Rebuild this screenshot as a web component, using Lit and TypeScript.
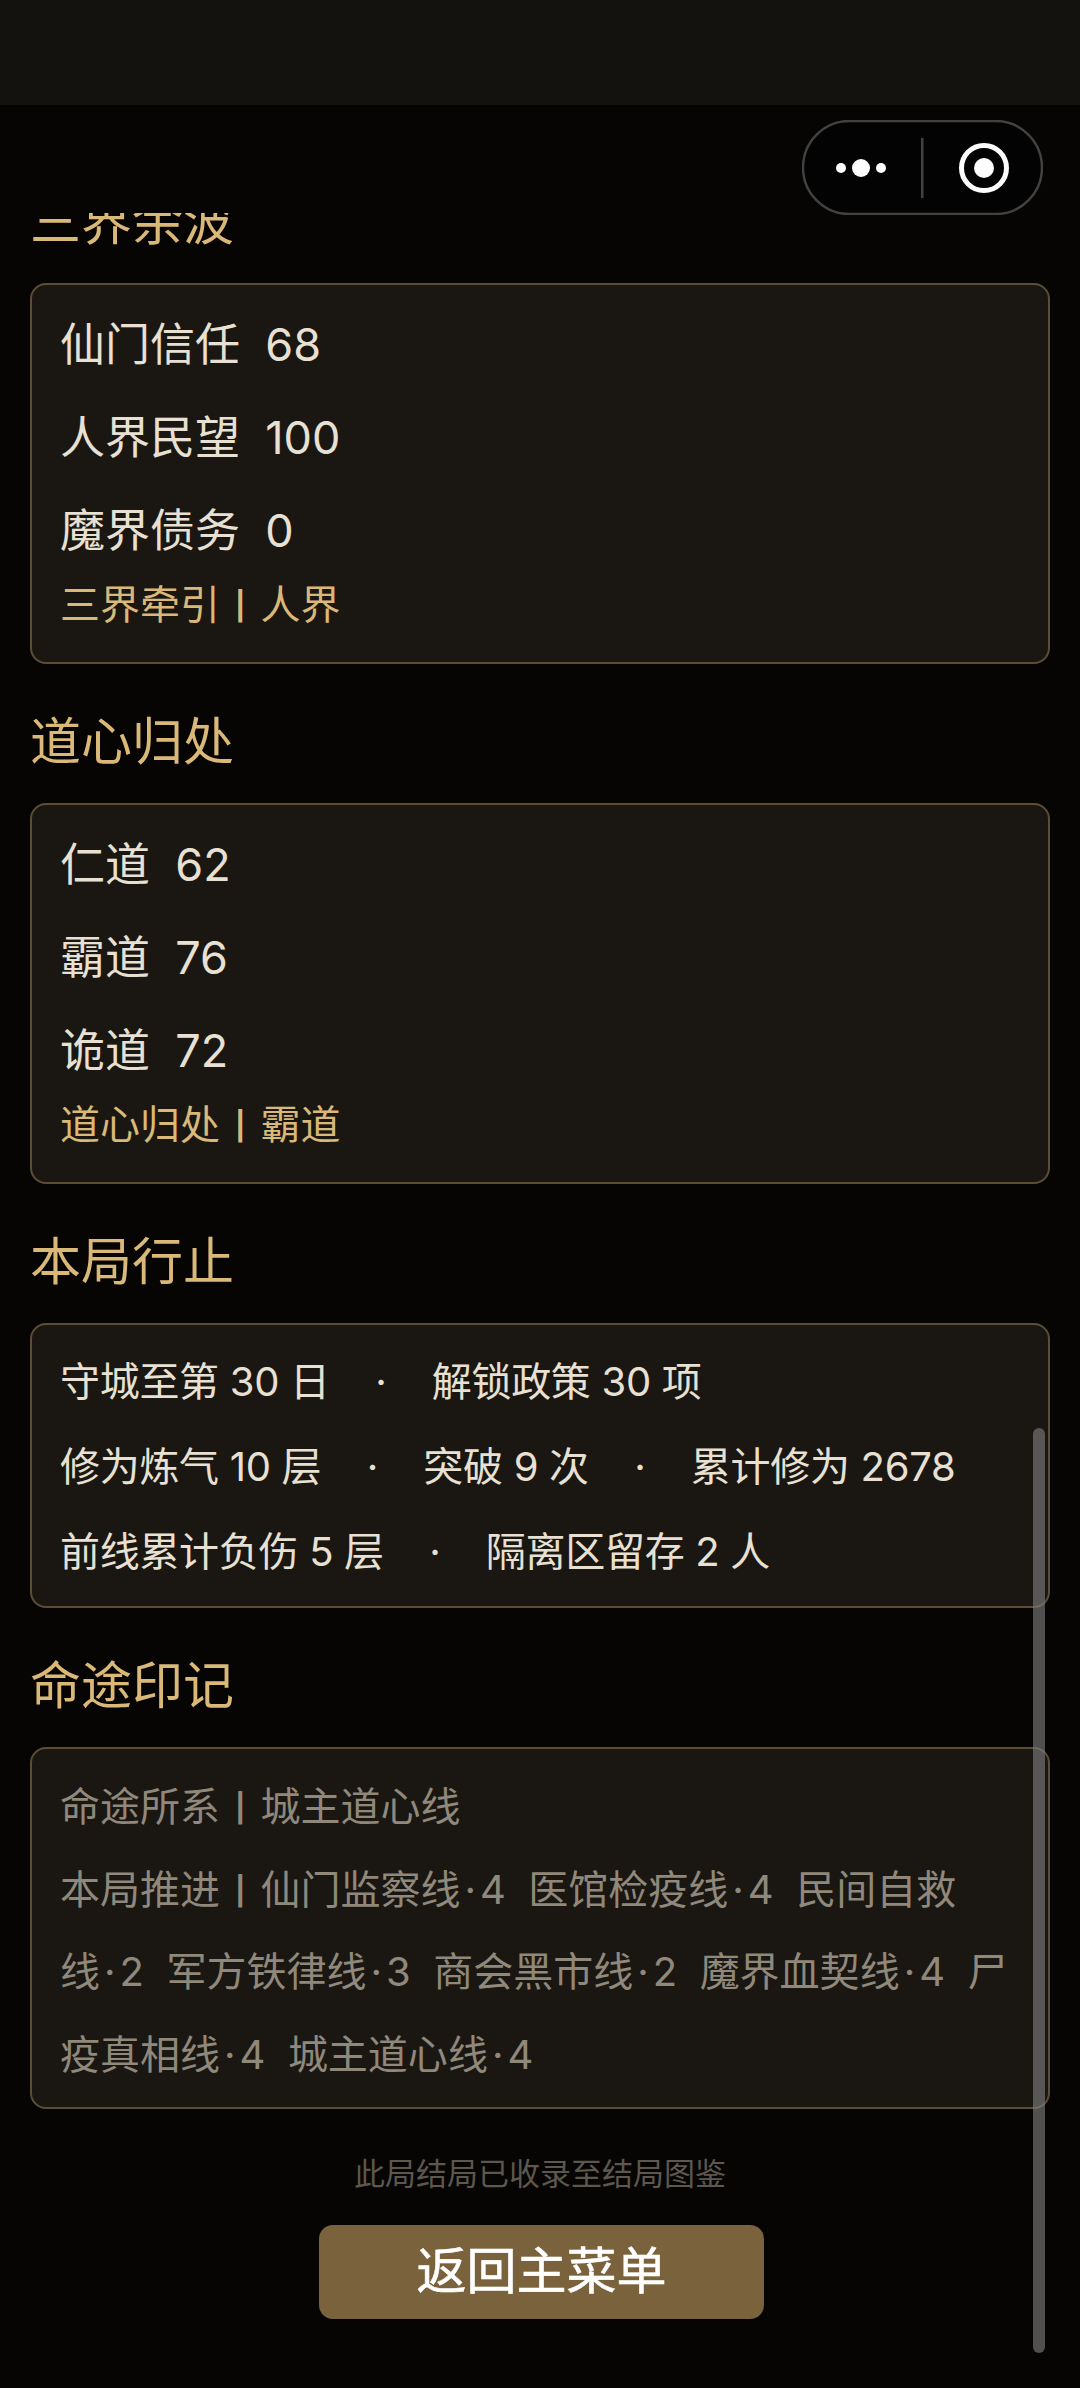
import { LitElement, html, css } from "lit";
import { customElement } from "lit/decorators.js";

interface Sec { title: string; rows: string[]; label: string; value: string }

const secs: Sec[] = [
  { title: "三界余波", rows: ["仙门信任\u00a0\u00a068", "人界民望\u00a0\u00a0100", "魔界债务\u00a0\u00a00"], label: "三界牵引", value: "人界" },
  { title: "道心归处", rows: ["仁道\u00a0\u00a062", "霸道\u00a0\u00a076", "诡道\u00a0\u00a072"], label: "道心归处", value: "霸道" },
];

const sep = html`<span class="sep">·</span>`;
const pipe = html`<span class="pipe">|</span>`;
const lines: [string, number][] = [
  ["仙门监察线", 4], ["医馆检疫线", 4], ["民间自救线", 2], ["军方铁律线", 3],
  ["商会黑市线", 2], ["魔界血契线", 4], ["尸疫真相线", 4], ["城主道心线", 4],
];

@customElement("app-root")
export class AppRoot extends LitElement {
  static styles = css`
    :host { display: block; width: 1080px; height: 2388px; background: #060504; position: relative; overflow: hidden;
      font-family: Inter, "Noto Sans CJK SC", sans-serif; font-weight: 400; }
    .status { height: 105px; background: #13120e; }
    .nav { height: 108px; }
    .scroll { height: 2175px; overflow: hidden; padding: 0 30px; box-sizing: border-box; }
    .inner { margin-top: -30px; }
    h2 { margin: 0; height: 100px; font-size: 51px; line-height: 78px; font-weight: 400; color: #d9b878; }
    .card { background: #1a1712; border: 2px solid #5c4d35; border-radius: 16px; box-sizing: border-box; padding: 0 30px 0 28px; margin-bottom: 39px; }
    .stat { height: 381px; padding-top: 13px; }
    .row { height: 93px; line-height: 93px; font-size: 45px; color: #e8e1d3; white-space: pre; }
    .note { font-size: 40px; line-height: 58px; color: #d9b878; margin-top: -1px; }
    .pipe { display: inline-block; font-size: 28px; line-height: 1; font-weight: 700; padding: 0 15px; vertical-align: 3px; }
    .run { height: 285px; padding-top: 14px; }
    .run div { height: 85px; line-height: 85px; font-size: 40px; letter-spacing: -0.3px; color: #e8e1d3; white-space: pre; }
    .sep { display: inline-block; width: 102px; text-align: center; }
    .fate { height: 362px; padding-top: 17px; font-size: 40px; line-height: 82.5px; color: #8f887b; }
    .nb { white-space: nowrap; }
    .dot { padding: 0 4px; }
    .foot { text-align: center; font-size: 31px; line-height: 46px; color: #5d574e; margin-top: 42px; }
    .btn { width: 445px; height: 94px; margin: 28px 0 0 289px; background: #7a623c; border-radius: 14px; color: #fff;
      font-size: 50px; line-height: 92px; text-align: center; -webkit-text-stroke: 0.6px #fff; }
    .capsule { position: absolute; left: 802px; top: 120px; width: 241px; height: 95px; }
    .bar { position: absolute; left: 1033px; top: 1428px; width: 12px; height: 925px; border-radius: 6px; background: rgba(128,128,128,0.62); }
  `;

  render() {
    return html`
      <div class="status"></div>
      <div class="nav"></div>
      <div class="scroll"><div class="inner">
        ${secs.map(s => html`
          <h2>${s.title}</h2>
          <div class="card stat">
            ${s.rows.map(r => html`<div class="row">${r}</div>`)}
            <div class="note">${s.label}${pipe}${s.value}</div>
          </div>`)}
        <h2>本局行止</h2>
        <div class="card run">
          <div>守城至第 30 日${sep}解锁政策 30 项</div>
          <div>修为炼气 10 层${sep}突破 9 次${sep}累计修为 2678</div>
          <div>前线累计负伤 5 层${sep}隔离区留存 2 人</div>
        </div>
        <h2>命途印记</h2>
        <div class="card fate">命途所系${pipe}城主道心线<br>本局推进${pipe}${lines.map(([n, v], i) => html`${n.slice(0, -1)}<span class="nb">${n.slice(-1)}<span class="dot">·</span>${v}</span>${i < lines.length - 1 ? "\u00a0\u00a0" : ""}`)}</div>
        <div class="foot">此局结局已收录至结局图鉴</div>
        <div class="btn">返回主菜单</div>
      </div></div>
      <svg class="capsule" viewBox="0 0 241 95" fill="none">
        <rect x="1" y="1" width="239" height="93" rx="46.5" fill="#030303" stroke="#424240" stroke-width="2.5"/>
        <rect x="119" y="18" width="2.5" height="60" fill="#424240"/>
        <circle cx="39" cy="48" r="5" fill="#fff"/><circle cx="59" cy="48" r="9" fill="#fff"/><circle cx="79" cy="48" r="5" fill="#fff"/>
        <circle cx="182" cy="48" r="22.5" stroke="#fff" stroke-width="5"/><circle cx="182" cy="48" r="10" fill="#fff"/>
      </svg>
      <div class="bar"></div>
    `;
  }
}
